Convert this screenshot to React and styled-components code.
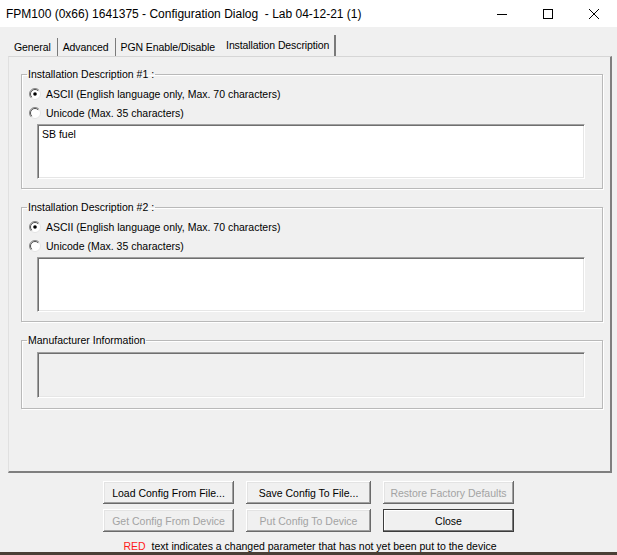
import React from 'react';
import styled, { createGlobalStyle } from 'styled-components';

const Global = createGlobalStyle`
  html, body { margin: 0; padding: 0; background: #f0f0f0; overflow: hidden; }
  #root { width: 617px; height: 555px; }
  * { box-sizing: border-box; }
`;

const Window = styled.div`
  width: 617px;
  height: 555px;
  display: flex;
  flex-direction: column;
  background: #f0f0f0;
  font-family: "Liberation Sans", Arial, sans-serif;
  font-size: 10.5px;
  color: #000;
  overflow: hidden;
`;

const TitleBar = styled.div`
  height: 27px;
  flex: none;
  background: #fff;
  display: flex;
  align-items: stretch;
  justify-content: space-between;
  padding-left: 6px;
`;

const Title = styled.div`
  font-size: 12px;
  white-space: pre;
  display: flex;
  align-items: center;
`;

const Controls = styled.div`
  display: flex;
`;

const Ctrl = styled.div`
  width: 46px;
  display: flex;
  align-items: center;
  justify-content: center;
`;

const Body = styled.div`
  height: 525px;
  flex: none;
  display: flex;
  flex-direction: column;
  padding: 8px 5px 0 8px;
`;

const TabStrip = styled.div`
  display: flex;
  height: 21px;
  flex: none;
  align-items: flex-end;
  padding-left: 1px;
`;

const Tab = styled.div`
  height: ${p => (p.$active ? 21 : 18)}px;
  padding: 0 ${p => (p.$active ? 5 : p.$noSep ? 3 : 6)}px ${p => (p.$active ? 2 : 0)}px ${p => (p.$active ? 7 : 5)}px;
  display: flex;
  align-items: center;
  border-right: ${p => (p.$active ? '2px solid #7a7a7a' : p.$noSep ? '1px solid transparent' : '1px solid #7a7a7a')};
  white-space: nowrap;
  letter-spacing: -0.1px;
`;

const Panel = styled.div`
  height: 417px;
  flex: none;
  border-top: 1px solid #d6d6d6;
  border-left: 1px solid #e0e0e0;
  border-right: 2px solid #7f7f7f;
  border-bottom: 2px solid #7f7f7f;
  padding: 11px 7px 0 12px;
  display: flex;
  flex-direction: column;
  gap: 12px;
`;

const Group = styled.fieldset`
  margin: 0;
  min-width: 0;
  padding: 0 0 ${p => p.$pb}px 0;
  border: 1px solid #b9b9b9;
  box-shadow: inset 1px 1px 0 #fff, 1px 1px 0 #fff;
`;

const Legend = styled.legend`
  margin-left: 5px;
  padding: 0 1px;
  line-height: 13px;
`;

const RadioList = styled.div`
  display: flex;
  flex-direction: column;
  padding: 3px 0 0 7px;
`;

const RadioRow = styled.div`
  height: 19px;
  display: flex;
  align-items: center;
  gap: 5px;
`;

const TextBox = styled.div`
  margin: ${p => p.$mt}px 17px 0 15px;
  height: ${p => p.$h}px;
  background: ${p => (p.$disabled ? '#f0f0f0' : '#fff')};
  border: 1px solid;
  border-color: #a0a0a0 #fff #fff #a0a0a0;
  box-shadow: inset 1px 1px 0 #6f6f6f, inset -1px -1px 0 #e6e6e6;
  padding: 3px 4px;
  line-height: 13px;
`;

const Footer = styled.div`
  flex: 1;
  display: flex;
  flex-direction: column;
  padding-top: 8px;
`;

const ButtonGrid = styled.div`
  display: grid;
  grid-template-columns: 131px 125px 131px;
  column-gap: 12px;
  row-gap: 5px;
  margin-left: 95px;
`;

const Button = styled.button`
  font-family: inherit;
  font-size: 10.5px;
  height: 23px;
  padding: 0;
  border: none;
  background: #f0f0f0;
  color: ${p => (p.disabled ? '#a3a3a3' : '#000')};
  box-shadow: ${p =>
    p.$default
      ? 'inset 0 0 0 1px #3c3c3c, inset -2px -2px 0 #7a7a7a, inset 2px 2px 0 #fff'
      : 'inset -1px -1px 0 #6a6a6a, inset 1px 1px 0 #fff, inset -2px -2px 0 #a0a0a0, inset 2px 2px 0 #e3e3e3'};
`;

const Note = styled.div`
  margin-top: 7px;
  line-height: 14px;
  text-align: center;
  white-space: nowrap;
`;

const Red = styled.span`
  color: #ff1a1a;
  margin-right: 6px;
`;

const BottomEdge = styled.div`
  height: 3px;
  flex: none;
  background: #4a3f36;
`;

const Radio = ({ checked }) => (
  <svg width="12" height="12" viewBox="0 0 12 12">
    <circle cx="6" cy="6" r="5.5" fill="#fff" stroke="#e3e3e3" strokeWidth="1" />
    <path d="M2.1 9.9 A5.5 5.5 0 0 1 9.9 2.1" fill="none" stroke="#8a8a8a" strokeWidth="1" />
    <path d="M2.8 9.2 A4.5 4.5 0 0 1 9.2 2.8" fill="none" stroke="#505050" strokeWidth="1" />
    {checked && <circle cx="6" cy="6" r="1.8" fill="#000" />}
  </svg>
);

const RadioPair = () => (
  <RadioList>
    <RadioRow>
      <Radio checked />
      <span>ASCII (English language only, Max. 70 characters)</span>
    </RadioRow>
    <RadioRow>
      <Radio />
      <span>Unicode (Max. 35 characters)</span>
    </RadioRow>
  </RadioList>
);

export default function App() {
  return (
    <>
      <Global />
      <Window>
        <TitleBar>
          <Title>FPM100 (0x66) 1641375 - Configuration Dialog  - Lab 04-12-21 (1)</Title>
          <Controls>
            <Ctrl>
              <svg width="10" height="10" viewBox="0 0 10 10">
                <path d="M0 5.5H10" stroke="#000" strokeWidth="1" />
              </svg>
            </Ctrl>
            <Ctrl>
              <svg width="10" height="10" viewBox="0 0 10 10">
                <rect x="0.5" y="0.5" width="9" height="9" fill="none" stroke="#000" strokeWidth="1" />
              </svg>
            </Ctrl>
            <Ctrl>
              <svg width="10" height="10" viewBox="0 0 10 10">
                <path d="M0 0L10 10M10 0L0 10" stroke="#000" strokeWidth="1" />
              </svg>
            </Ctrl>
          </Controls>
        </TitleBar>
        <Body>
          <TabStrip>
            <Tab>General</Tab>
            <Tab>Advanced</Tab>
            <Tab $noSep>PGN Enable/Disable</Tab>
            <Tab $active>Installation Description</Tab>
          </TabStrip>
          <Panel>
            <Group $pb={9}>
              <Legend>Installation Description #1 :</Legend>
              <RadioPair />
              <TextBox $mt={2} $h={55}>SB fuel</TextBox>
            </Group>
            <Group $pb={9}>
              <Legend>Installation Description #2 :</Legend>
              <RadioPair />
              <TextBox $mt={2} $h={55} />
            </Group>
            <Group $pb={10}>
              <Legend>Manufacturer Information</Legend>
              <TextBox $mt={5} $h={46} $disabled />
            </Group>
          </Panel>
          <Footer>
            <ButtonGrid>
              <Button>Load Config From File...</Button>
              <Button>Save Config To File...</Button>
              <Button disabled>Restore Factory Defaults</Button>
              <Button disabled>Get Config From Device</Button>
              <Button disabled>Put Config To Device</Button>
              <Button $default>Close</Button>
            </ButtonGrid>
            <Note>
              <Red>RED</Red>text indicates a changed parameter that has not yet been put to the device
            </Note>
          </Footer>
        </Body>
        <BottomEdge />
      </Window>
    </>
  );
}
